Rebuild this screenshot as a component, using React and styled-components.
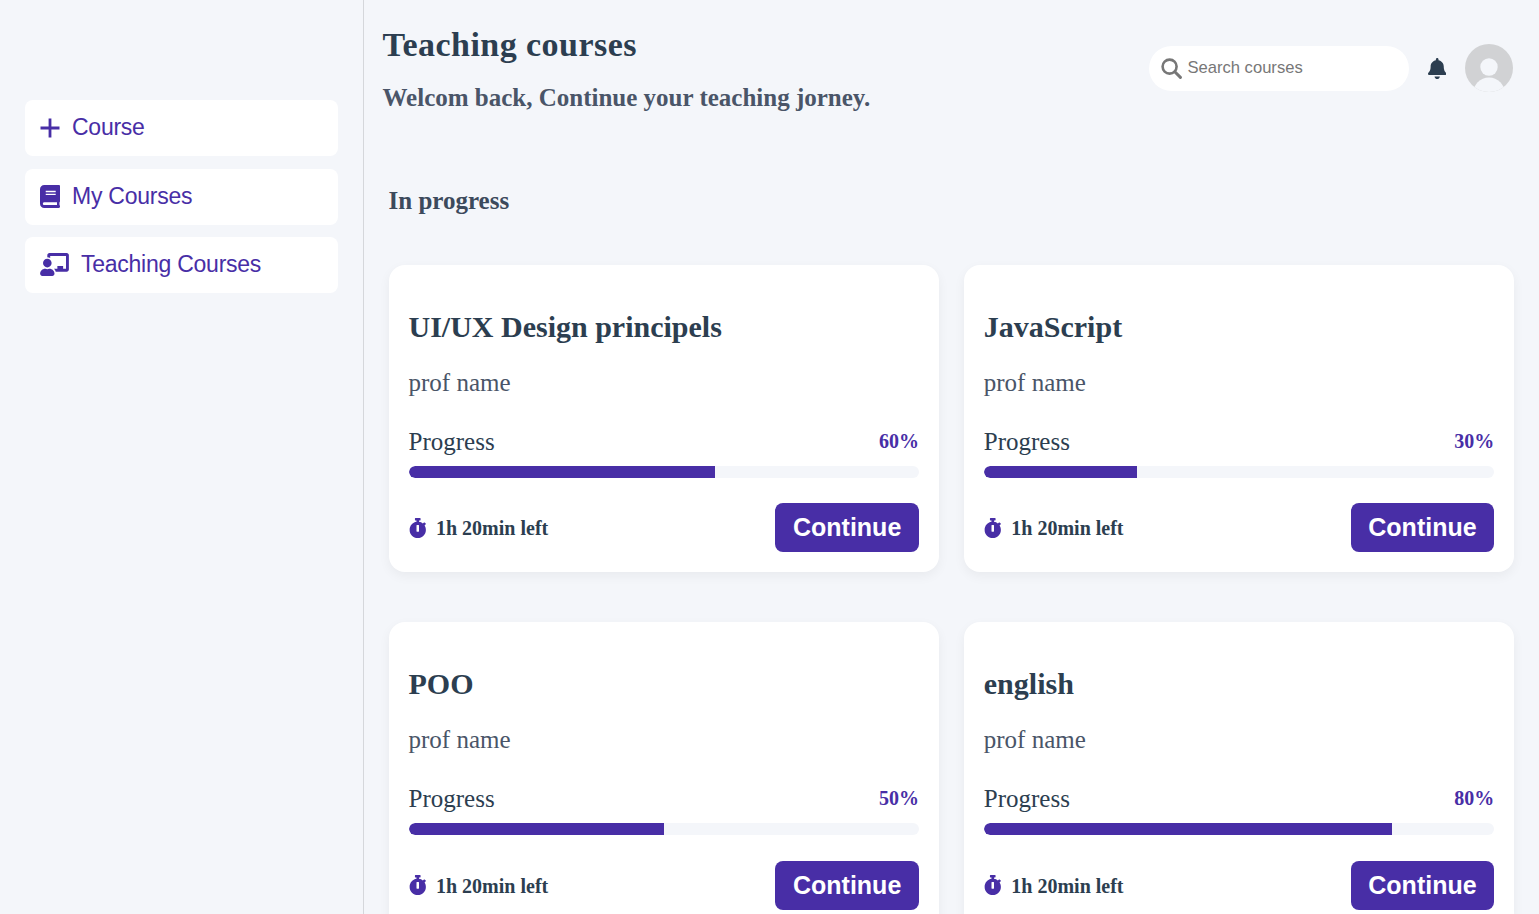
import React from 'react';
import styled, { createGlobalStyle } from 'styled-components';
import { FaBook, FaChalkboardTeacher, FaStopwatch, FaBell } from 'react-icons/fa';

const purple = '#482ea6';
const ink = '#2c3e50';
const pageBg = '#f4f6fa';

const courses = [
    { id: 1, title: 'UI/UX Design principels', progress: 60 },
    { id: 2, title: 'JavaScript', progress: 30 },
    { id: 3, title: 'POO', progress: 50 },
    { id: 4, title: 'english', progress: 80 },
];

const Global = createGlobalStyle`
    html, body {
        margin: 0;
        height: 100%;
        overflow: hidden;
        background: ${pageBg};
    }
`;

const Page = styled.div`
    display: flex;
    height: 914px;
    overflow: hidden;
    font-family: "Liberation Serif", serif;
`;

const Sidebar = styled.aside`
    width: 364px;
    flex: none;
    box-sizing: border-box;
    padding: 100px 25px 0;
    border-right: 1px solid #d5d7db;
    display: flex;
    flex-direction: column;
    gap: 12.5px;
`;

const NavItem = styled.a`
    height: 56px;
    box-sizing: border-box;
    padding: 0 0 1px 15px;
    background: #fff;
    border-radius: 8px;
    display: flex;
    align-items: center;
    gap: 12px;
    color: ${purple};
    font-family: "Liberation Sans", sans-serif;
    font-size: 23px;
    letter-spacing: -0.25px;
    svg {
        flex: none;
    }
`;

const BookIcon = styled(FaBook)`
    width: 20px;
    height: 23px;
`;

const TeacherIcon = styled(FaChalkboardTeacher)`
    width: 29px;
    height: 23px;
`;

const Main = styled.main`
    flex: 1;
    min-width: 0;
    padding: 0 26px 0 18.5px;
`;

const Header = styled.header`
    display: flex;
    justify-content: space-between;
    height: 153px;
`;

const Title = styled.h1`
    margin: 25px 0 0;
    font-size: 34px;
    line-height: 40px;
    font-weight: 700;
    letter-spacing: 0.45px;
    color: ${ink};
`;

const Subtitle = styled.p`
    margin: 18px 0 0;
    font-size: 25px;
    line-height: 29px;
    font-weight: 700;
    color: #4a5568;
`;

const Tools = styled.div`
    display: flex;
    align-items: center;
    height: 48px;
    margin-top: 44px;
`;

const SearchBox = styled.div`
    width: 260px;
    height: 45px;
    box-sizing: border-box;
    background: #fff;
    border-radius: 23px;
    display: flex;
    align-items: center;
    gap: 5px;
    padding-left: 12px;
    color: #777;
    font-family: "Liberation Sans", sans-serif;
    font-size: 16.6px;
`;

const BellIcon = styled(FaBell)`
    width: 18.4px;
    height: 21px;
    margin: 0 18.6px;
    color: ${ink};
`;

const Avatar = styled.svg`
    width: 48px;
    height: 48px;
    display: block;
`;

const SectionTitle = styled.h2`
    margin: 0 0 50px 6px;
    font-size: 25px;
    line-height: 29px;
    font-weight: 700;
    color: #3c4a5c;
    padding-top: 33px;
`;

const Grid = styled.div`
    display: grid;
    grid-template-columns: 550px 550px;
    column-gap: 25.3px;
    row-gap: 50px;
    margin-left: 6.5px;
`;

const Card = styled.article`
    background: #fff;
    border-radius: 16px;
    box-shadow: 0 4px 12px rgba(0, 0, 0, 0.05);
    padding: 44px 20px 20px;
    height: 307.2px;
    box-sizing: border-box;
`;

const CardTitle = styled.h3`
    margin: 0 0 0 -0.5px;
    font-size: 30px;
    line-height: 36px;
    font-weight: 700;
    color: ${ink};
`;

const Prof = styled.p`
    margin: 23px 0 0 -0.5px;
    font-size: 25px;
    line-height: 29px;
    color: #4a5568;
`;

const ProgressRow = styled.div`
    display: flex;
    justify-content: space-between;
    align-items: center;
    margin: 30px 0 0 -0.5px;
    height: 29px;
    font-size: 25px;
    color: ${ink};
`;

const Percent = styled.span`
    font-size: 20px;
    font-weight: 700;
    color: ${purple};
`;

const Track = styled.div`
    height: 12px;
    margin-top: 10px;
    background: ${pageBg};
    border-radius: 6px;
    overflow: hidden;
`;

const Fill = styled.div`
    height: 100%;
    background: ${purple};
    border-radius: 6px 0 0 6px;
`;

const CardFoot = styled.div`
    display: flex;
    justify-content: space-between;
    align-items: center;
    margin-top: 25.4px;
`;

const TimeLeft = styled.span`
    display: flex;
    align-items: center;
    gap: 9.5px;
    font-size: 20px;
    font-weight: 700;
    color: ${ink};
`;

const TimeIcon = styled(FaStopwatch)`
    width: 17.5px;
    height: 20px;
    color: ${purple};
`;

const TimeText = styled.span`
    padding-top: 2px;
`;

const ContinueButton = styled.button`
    width: 143.7px;
    height: 49px;
    padding: 0;
    border: none;
    border-radius: 8px;
    background: ${purple};
    color: #fff;
    font-family: "Liberation Sans", sans-serif;
    font-size: 25px;
    font-weight: 700;
`;

const PlusIcon = () => (
    <svg width="20" height="20" viewBox="0 0 20 20" fill="none" stroke="currentColor" strokeWidth="2.8">
        <path d="M10 0.5v19M0.5 10h19" />
    </svg>
);

const SearchIcon = () => (
    <svg width="21" height="21" viewBox="0 0 21 21" fill="none" stroke="currentColor" strokeLinecap="round">
        <circle cx="8.6" cy="8.6" r="7" strokeWidth="2.6" />
        <path d="M13.8 13.8l5.6 5.6" strokeWidth="3" />
    </svg>
);

const App = () => (
    <Page>
        <Global />
        <Sidebar>
            <NavItem><PlusIcon />Course</NavItem>
            <NavItem><BookIcon />My Courses</NavItem>
            <NavItem><TeacherIcon />Teaching Courses</NavItem>
        </Sidebar>
        <Main>
            <Header>
                <div>
                    <Title>Teaching courses</Title>
                    <Subtitle>Welcom back, Continue your teaching jorney.</Subtitle>
                </div>
                <Tools>
                    <SearchBox><SearchIcon />Search courses</SearchBox>
                    <BellIcon />
                    <Avatar viewBox="0 0 48 48">
                        <defs>
                            <clipPath id="avatarClip"><circle cx="24" cy="24" r="24" /></clipPath>
                        </defs>
                        <g clipPath="url(#avatarClip)">
                            <rect width="48" height="48" fill="#d1d2d4" />
                            <circle cx="24" cy="23" r="8.7" fill={pageBg} />
                            <ellipse cx="24" cy="50" rx="16" ry="16.5" fill={pageBg} />
                        </g>
                    </Avatar>
                </Tools>
            </Header>
            <SectionTitle>In progress</SectionTitle>
            <Grid>
                {courses.map((course) => (
                    <Card key={course.id}>
                        <CardTitle>{course.title}</CardTitle>
                        <Prof>prof name</Prof>
                        <ProgressRow>
                            <span>Progress</span>
                            <Percent>{course.progress}%</Percent>
                        </ProgressRow>
                        <Track><Fill style={{ width: `${course.progress}%` }} /></Track>
                        <CardFoot>
                            <TimeLeft><TimeIcon /><TimeText>1h 20min left</TimeText></TimeLeft>
                            <ContinueButton>Continue</ContinueButton>
                        </CardFoot>
                    </Card>
                ))}
            </Grid>
        </Main>
    </Page>
);

export default App;
